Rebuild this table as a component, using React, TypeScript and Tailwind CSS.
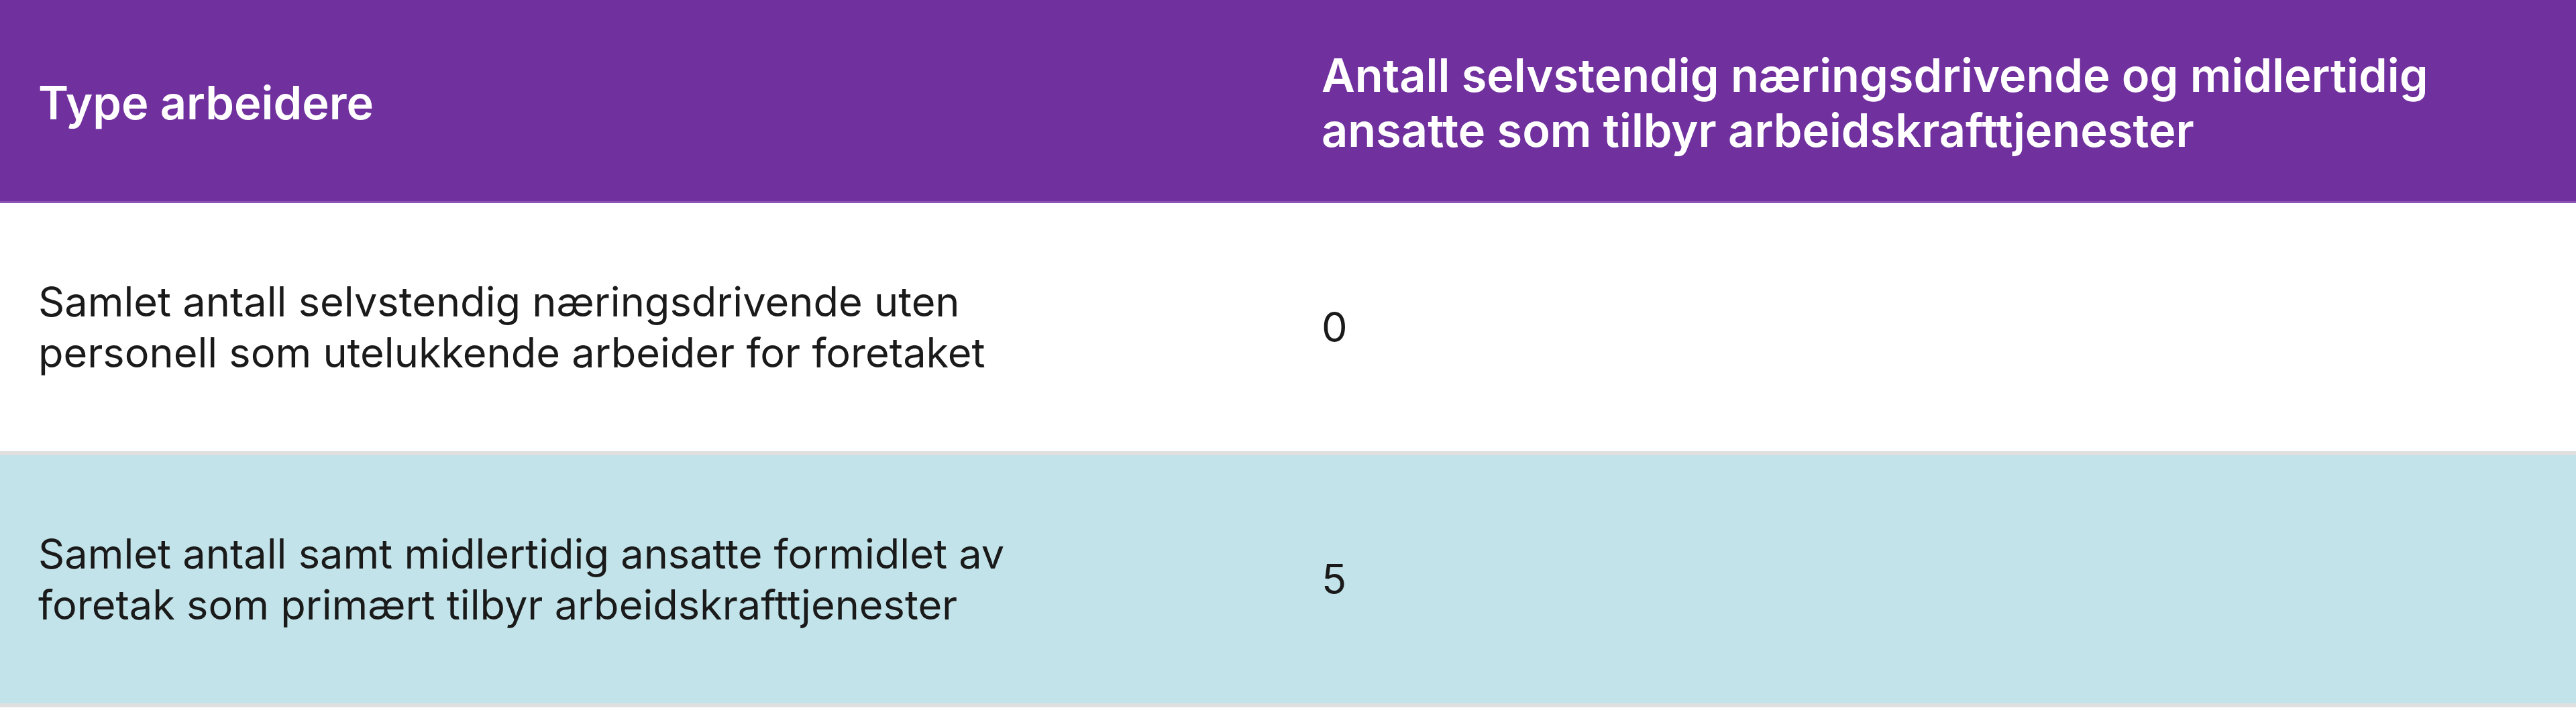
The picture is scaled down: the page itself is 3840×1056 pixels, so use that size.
const rows = [
  {
    label: "Samlet antall selvstendig næringsdrivende uten personell som utelukkende arbeider for foretaket",
    value: "0",
    bg: "bg-white",
  },
  {
    label: "Samlet antall samt midlertidig ansatte formidlet av foretak som primært tilbyr arbeidskrafttjenester",
    value: "5",
    bg: "bg-[#c1e3e9]",
  },
];

export default function App() {
  return (
    <div className="w-[3840px] font-['Inter',sans-serif]">
      <div className="grid grid-cols-2 h-[303px] pt-[8px] items-center bg-[#70309e] border-b-[3px] border-[#8b53b5] text-white font-semibold text-[68.5px] leading-[82px]">
        <div className="pl-[57px] pr-[80px]">Type arbeidere</div>
        <div className="pl-[50px] pr-[160px]">
          Antall selvstendig næringsdrivende og midlertidig ansatte som tilbyr arbeidskrafttjenester
        </div>
      </div>
      {rows.map((r) => (
        <div
          key={r.value}
          className={`grid grid-cols-2 h-[376px] items-center border-b-[6px] border-[#e0e0e0] text-[#1a1a1a] text-[61.3px] leading-[76px] ${r.bg}`}
        >
          <div className="pl-[57px] pr-[380px]">{r.label}</div>
          <div className="pl-[50px]">{r.value}</div>
        </div>
      ))}
    </div>
  );
}
